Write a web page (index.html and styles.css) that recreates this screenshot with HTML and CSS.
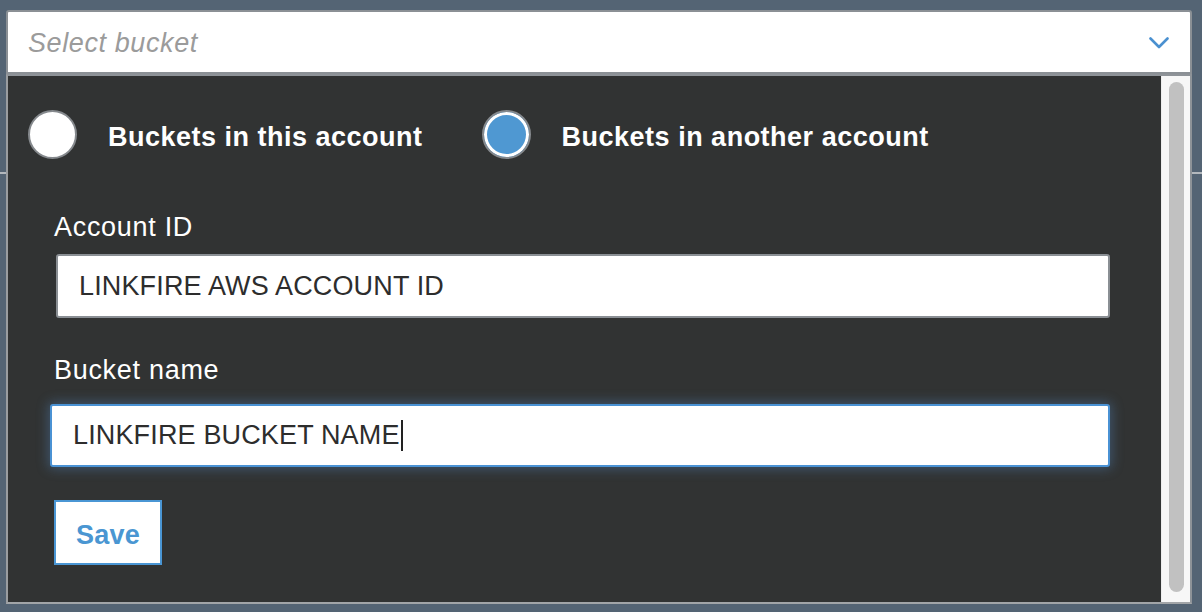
FILE: index.html
```html
<!DOCTYPE html>
<html lang="en">
<head>
<meta charset="utf-8">
<title>Select bucket</title>
<link rel="stylesheet" href="styles.css">
</head>
<body>
<div class="picker">
  <div class="select">
    <span class="placeholder">Select bucket</span>
    <svg class="chevron" width="20" height="12" viewBox="0 0 20 12"><path d="M1.5 1.5 L10 10 L18.5 1.5" fill="none" stroke="#4a90d0" stroke-width="2.6" stroke-linecap="round" stroke-linejoin="round"/></svg>
  </div>
  <div class="panel">
    <div class="content">
      <div class="radios">
        <div class="radio-item">
          <span class="radio"></span>
          <span class="radio-label">Buckets in this account</span>
        </div>
        <div class="radio-item second">
          <span class="radio checked"></span>
          <span class="radio-label">Buckets in another account</span>
        </div>
      </div>
      <div class="form">
        <div class="label label-account">Account ID</div>
        <div class="field field-account">LINKFIRE AWS ACCOUNT ID</div>
        <div class="label label-bucket">Bucket name</div>
        <div class="field field-bucket focused">LINKFIRE BUCKET NAME<span class="caret"></span></div>
        <div class="save">Save</div>
      </div>
    </div>
    <div class="scrollbar"><div class="thumb"></div></div>
  </div>
</div>
</body>
</html>
```
FILE: styles.css
```css
html, body {
  margin: 0;
  height: 100%;
}
body {
  background:
    linear-gradient(to bottom, transparent 172px, #b3b8bd 172px, #b3b8bd 174px, transparent 174px),
    #546474;
  font-family: "Liberation Sans", Arial, Helvetica, sans-serif;
  padding: 10px 10px 0 6px;
  box-sizing: border-box;
  overflow: hidden;
}
.picker {
  width: 1186px;
}
.select {
  height: 64px;
  box-sizing: border-box;
  background: #fff;
  border: 2px solid #8b9095;
  border-radius: 3px 3px 0 0;
  display: flex;
  align-items: center;
  padding: 0 20px 0 20px;
}
.placeholder {
  flex: 1;
  font-style: italic;
  font-size: 27px;
  letter-spacing: 0.6px;
  color: #9b9b9b;
  padding-top: 3px;
}
.chevron {
  display: block;
  margin-right: 1px;
  margin-top: 2px;
}
.panel {
  height: 530px;
  box-sizing: border-box;
  background: #313333;
  border: 2px solid #8e9398;
  border-left-color: #9a9da0;
  border-bottom-color: #a2a5a8;
  display: flex;
}
.content {
  flex: 1;
  min-width: 0;
}
.radios {
  display: flex;
  align-items: center;
  padding: 34px 0 0 20px;
  height: 49px;
}
.radio-item {
  display: flex;
  align-items: center;
}
.radio-item.second {
  margin-left: 59px;
}
.radio {
  width: 49px;
  height: 49px;
  box-sizing: border-box;
  border-radius: 50%;
  background: #fff;
  border: 2px solid #85898d;
}
.radio.checked {
  background: #4f98d2;
  box-shadow: inset 0 0 0 3px #fff;
}
.radio-label {
  margin-left: 31px;
  color: #fff;
  font-weight: bold;
  font-size: 27px;
  letter-spacing: 0.5px;
  line-height: 30px;
  padding-top: 4px;
}
.form {
  padding-left: 46px;
}
.label {
  color: #fff;
  font-size: 27px;
  letter-spacing: 0.7px;
  line-height: 30px;
}
.label-account {
  margin-top: 53px;
}
.label-bucket {
  margin-top: 37px;
}
.field {
  box-sizing: border-box;
  background: #fff;
  border: 2px solid #8a8f94;
  border-radius: 3px;
  color: #2d2d2d;
  font-size: 27px;
  letter-spacing: 0.15px;
  display: flex;
  align-items: center;
  padding-left: 21px;
}
.field-account {
  margin-top: 12px;
  margin-left: 2px;
  width: 1054px;
  height: 64px;
}
.field-bucket {
  margin-top: 19px;
  margin-left: -4px;
  width: 1060px;
  height: 63px;
}
.field.focused {
  border-color: #4a92d4;
  box-shadow: 0 0 12px 2px rgba(90, 150, 215, 0.35);
}
.caret {
  display: inline-block;
  width: 2px;
  height: 31px;
  background: #222;
  margin-left: 1px;
}
.save {
  margin-top: 33px;
  width: 108px;
  height: 65px;
  box-sizing: border-box;
  background: #fff;
  border: 2px solid #4a96d4;
  color: #4a96d2;
  font-weight: bold;
  font-size: 27px;
  letter-spacing: 0.2px;
  display: flex;
  align-items: center;
  justify-content: center;
  padding-top: 5px;
}
.scrollbar {
  width: 29px;
  background: #f7f7f7;
  border-left: 1px solid #ededed;
  box-sizing: border-box;
  padding: 6px 6px 10px 7px;
}
.thumb {
  height: 100%;
  background: #c1c1c1;
  border-radius: 8px;
}
```
